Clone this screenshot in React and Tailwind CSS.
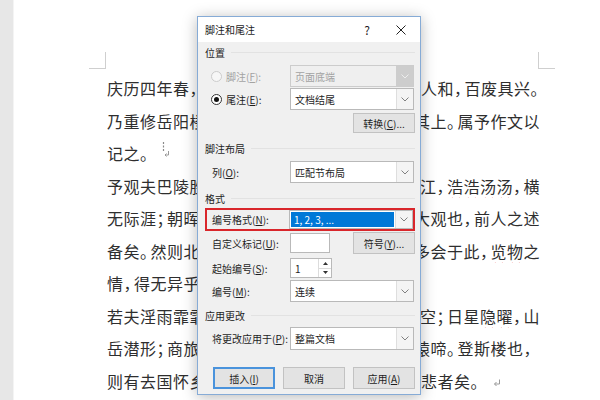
import React from 'react';

const lines = [
  { l: '庆历四年春，滕子京谪守巴陵郡。越明年，政通', r: ['人和，百废具兴。'], start: true },
  { l: '乃重修岳阳楼，增其旧制，刻唐贤今人诗赋于', r: ['诗赋于其上。属予作文以'] },
  { l: '记之。', mark: true },
  { l: '予观夫巴陵胜状，在洞庭一湖。衔远山，吞长', r: ['吞长江，', { u: '浩浩汤汤' }, '，横'] },
  { l: '无际涯；朝晖夕阴，气象万千。此则岳阳楼之', r: ['岳阳楼之大观也，前人之述'] },
  { l: '备矣。然则北通巫峡，南极潇湘，迁客骚人，', r: ['骚人，多会于此，', { u: '览物' }, '之'] },
  { l: '情，得无异乎？' },
  { l: '若夫淫雨霏霏，连月不开，阴风怒号，浊浪排', r: ['浊浪排空；日星', { u: '隐曜' }, '，山'] },
  { l: '岳潜形；商旅不行，樯倾楫摧；薄暮冥冥，虎啸', r: ['虎啸猿啼。登斯楼也，'] },
  { l: '则有去国怀乡，忧谗畏讥，满目萧然，感极而', r: ['悲者矣。'], start: true, ret: true },
];

// squeeze mid-line punctuation the way Word does
const squeeze = (s, last) =>
  s.split('').map((c, i) =>
    '，。；'.includes(c) && !(last && i === s.length - 1)
      ? <span key={i} className="mr-[-6px]">{c}</span>
      : c
  );

const Segs = ({ parts }) =>
  parts.map((p, i) => {
    const last = i === parts.length - 1;
    if (typeof p === 'string') return <React.Fragment key={i}>{squeeze(p, last)}</React.Fragment>;
    return (
      <span key={i} className="underline decoration-wavy decoration-[#e02424] decoration-1 underline-offset-[4px]">
        {squeeze(p.u, last)}
      </span>
    );
  });

const RetMark = () => (
  <svg width="8" height="8" viewBox="0 0 8 8" className="ml-[6px] mt-[4px] shrink-0">
    <path d="M6.5 0.5 V5 H1.5" fill="none" stroke="#9a9a9a" strokeWidth="1" />
    <path d="M3.5 3 L1.5 5 L3.5 7" fill="none" stroke="#9a9a9a" strokeWidth="1" />
  </svg>
);

const Chev = ({ c = '#777' }) => (
  <svg width="8" height="5" viewBox="0 0 8 5">
    <path d="M0.5 0.5 L4 4 L7.5 0.5" fill="none" stroke={c} strokeWidth="1" />
  </svg>
);

const Select = ({ value, disabled, active, h = 'h-[22px]' }) => (
  <div className={`w-[124px] ${h} flex border ${disabled ? 'border-[#cccccc] bg-[#efefef]' : 'border-[#b9b9b9] bg-white'}`}>
    {active ? (
      <div className="flex-1 flex items-center p-[1px]">
        <div className="h-full flex-1 bg-[#0078d7] text-white flex items-center pl-[3px]">{value}</div>
      </div>
    ) : (
      <div className={`flex-1 flex items-center pl-[4px] ${disabled ? 'text-[#a3a3a3]' : ''}`}>{value}</div>
    )}
    <div className={`w-[17px] flex items-center justify-center ${disabled ? 'bg-[#cdcdcd]' : 'bg-[#f4f4f4] border-l border-[#dedede]'}`}>
      <Chev c={disabled ? '#ededed' : '#808080'} />
    </div>
  </div>
);

const Btn = ({ children, focus }) => (
  <div className={`w-[62px] h-[22px] flex items-center justify-center bg-[#e3e3e3] ${focus ? 'border-2 border-[#4a93dc]' : 'border border-[#c2c2c2]'}`}>
    {children}
  </div>
);

const Section = ({ children, mt }) => (
  <div className={`flex items-center h-[16px] ${mt}`}>
    <span>{children}</span>
    <div className="flex-1 h-px bg-[#e2e2e2] ml-[6px]" />
  </div>
);

const Row = ({ label, children, mt }) => (
  <div className={`flex items-center ${mt}`}>
    <div className="w-[85px] pl-[7px] whitespace-nowrap">{label}</div>
    {children}
  </div>
);

const K = ({ k }) => <>(<u>{k}</u>)</>;

export default function App() {
  return (
    <div className="w-[600px] h-[400px] relative overflow-hidden bg-white flex" style={{ fontFamily: '"Noto Sans CJK SC", "Noto Sans", sans-serif' }}>
      <div className="w-[14px] h-full bg-[#e7e7e7] border-r border-[#f4f4f4]" />
      <div className="flex-1 flex flex-col">
        <div className="flex pt-[52px] h-[69px]">
          <div className="ml-[75px] w-[17px] h-[17px] border-r border-b border-[#cfcfcf]" />
          <div className="ml-[432px] w-[17px] h-[17px] border-l border-b border-[#cfcfcf]" />
        </div>
        <div className="mt-[3px] ml-[93px] text-[16px] tracking-[0.5px] text-[#2e2e2e]">
          {lines.map((ln, i) => (
            <div key={i} className="flex h-[32.5px] items-center">
              <div className="w-[300px] overflow-hidden whitespace-nowrap flex items-center">
                <Segs parts={[ln.l]} />
                {ln.mark && (
                  <svg width="8" height="16" viewBox="0 0 8 16" className="ml-[5px] mt-[-6px]">
                    <path d="M1.5 0 V10" stroke="#8a8a8a" strokeWidth="1.2" strokeDasharray="2 1.5" />
                    <path d="M6.5 9 V13 H3 M4.5 11.5 L3 13 L4.5 14.5" fill="none" stroke="#9a9a9a" strokeWidth="1" />
                  </svg>
                )}
              </div>
              {ln.r && (
                <div className={`w-[160px] overflow-hidden whitespace-nowrap flex items-center ${ln.start ? 'justify-start pl-[14px]' : 'justify-end pr-[27px]'}`}>
                  <span className="shrink-0"><Segs parts={ln.r} /></span>
                  {ln.ret && <RetMark />}
                </div>
              )}
            </div>
          ))}
        </div>
      </div>

      <div className="absolute left-[197px] top-[16px] w-[224px] h-[379px] border border-[#86abd6] bg-[#f0f0f0] shadow-[0_2px_14px_rgba(0,0,0,0.28)] flex flex-col text-[10px] text-[#1e1e1e]">
        <div className="h-[25px] bg-white flex items-center pl-[7px]">
          <span className="flex-1">脚注和尾注</span>
          <span className="mr-[26px] text-[12px]">?</span>
          <svg width="10" height="10" viewBox="0 0 10 10" className="mr-[14px]">
            <path d="M0.5 0.5 L9.5 9.5 M9.5 0.5 L0.5 9.5" stroke="#222" strokeWidth="1" />
          </svg>
        </div>
        <div className="flex flex-col pl-[7px] pr-[5px]">
          <Section mt="mt-[2px]">位置</Section>
          <div className="flex items-center mt-[5px]">
            <div className="w-[85px] pl-[6px] flex items-center text-[#a3a3a3] whitespace-nowrap">
              <div className="w-[11px] h-[11px] rounded-full border border-[#cccccc] bg-[#f7f7f7]" />
              <span className="ml-[4px]">脚注<K k="F" />:</span>
            </div>
            <Select value="页面底端" disabled />
          </div>
          <div className="flex items-center mt-[1px]">
            <div className="w-[85px] pl-[6px] flex items-center whitespace-nowrap">
              <div className="w-[11px] h-[11px] rounded-full border border-[#333] bg-white flex items-center justify-center">
                <div className="w-[5px] h-[5px] rounded-full bg-[#111]" />
              </div>
              <span className="ml-[4px]">尾注<K k="E" />:</span>
            </div>
            <Select value="文档结尾" />
          </div>
          <div className="flex justify-end mt-[3px]">
            <div className="w-[62px] h-[20px] flex items-center justify-center bg-[#e3e3e3] border border-[#c2c2c2]">转换<K k="C" />...</div>
          </div>

          <Section mt="mt-[7px]">脚注布局</Section>
          <Row label={<>列<K k="O" />:</>} mt="mt-[5px]">
            <Select value="匹配节布局" />
          </Row>

          <Section mt="mt-[7px]">格式</Section>
          <div className="mt-[2px] w-[210px] h-[23px] border-2 border-[#d9262b] flex items-center">
            <div className="w-[82px] pl-[5px] whitespace-nowrap">编号格式<K k="N" />:</div>
            <Select value="1, 2, 3, ..." active h="h-[19px]" />
          </div>
          <Row label={<>自定义标记<K k="U" />:</>} mt="mt-[1px]">
            <div className="w-[40px] h-[20px] bg-white border border-[#b9b9b9]" />
            <div className="ml-auto">
              <Btn>符号<K k="Y" />...</Btn>
            </div>
          </Row>
          <Row label={<>起始编号<K k="S" />:</>} mt="mt-[4px]">
            <div className="w-[42px] h-[20px] bg-white border border-[#b9b9b9] flex">
              <div className="flex-1 pl-[4px] flex items-center">1</div>
              <div className="w-[13px] flex flex-col border-l border-[#dcdcdc]">
                <div className="flex-1 flex items-center justify-center border-b border-[#dcdcdc]">
                  <svg width="5" height="3" viewBox="0 0 5 3"><path d="M0 3 L2.5 0 L5 3 Z" fill="#333" /></svg>
                </div>
                <div className="flex-1 flex items-center justify-center">
                  <svg width="5" height="3" viewBox="0 0 5 3"><path d="M0 0 L2.5 3 L5 0 Z" fill="#333" /></svg>
                </div>
              </div>
            </div>
          </Row>
          <Row label={<>编号<K k="M" />:</>} mt="mt-[2px]">
            <Select value="连续" />
          </Row>

          <Section mt="mt-[5px]">应用更改</Section>
          <Row label={<>将更改应用于<K k="P" />:</>} mt="mt-[4px]">
            <Select value="整篇文档" h="h-[23px]" />
          </Row>

          <div className="flex gap-[8px] ml-[8px] mt-[17px]">
            <Btn focus>插入<K k="I" /></Btn>
            <Btn>取消</Btn>
            <Btn>应用<K k="A" /></Btn>
          </div>
        </div>
      </div>
    </div>
  );
}
